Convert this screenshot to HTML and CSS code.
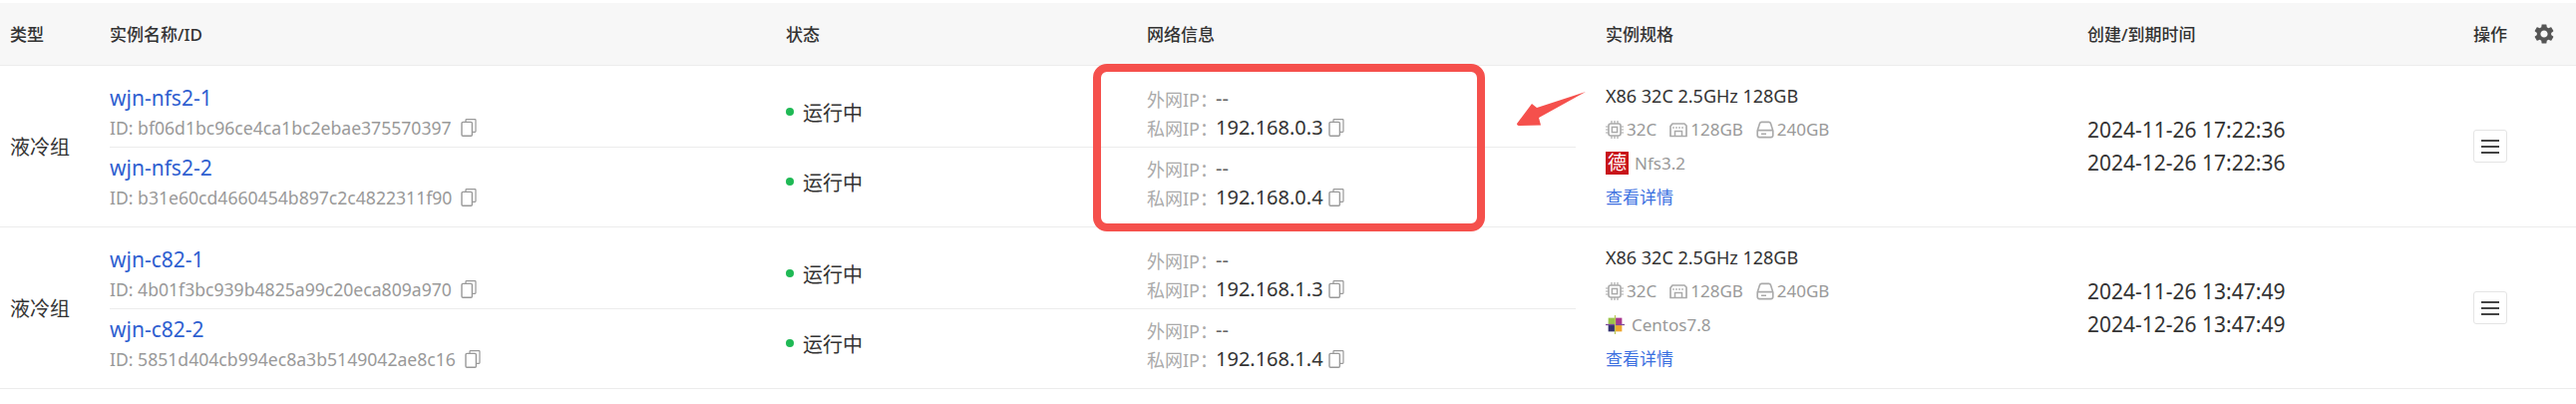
FILE: index.html
```html
<!DOCTYPE html>
<html lang="zh-CN">
  <head>
    <meta charset="UTF-8" />
    <title>实例列表</title>
    <link rel="stylesheet" href="styles.css">
  </head>
  <body>
    <svg class="defs" width="0" height="0">
      <symbol id="copy" viewBox="0 0 16 18">
        <path d="M5 3V1.500A.8.8 0 0 1 5.800.7h8.400a.8.8 0 0 1 .8.8v11a.8.8 0 0 1-.8.8H12" fill="none" stroke="currentColor" stroke-width="1.2" />
        <rect x="1" y="3.400" width="10.400" height="13.900" rx="1.200" fill="none" stroke="currentColor" stroke-width="1.4" />
      </symbol>
      <symbol id="cpu" viewBox="0 0 18 18">
        <rect x="3" y="3" width="12" height="12" rx="2" fill="none" stroke="currentColor" stroke-width="1.6" />
        <rect x="6.400" y="6.400" width="5.200" height="5.200" fill="none" stroke="currentColor" stroke-width="1.5" />
        <path d="M6 0v3M9 0v3M12 0v3M6 15v3M9 15v3M12 15v3M0 6h3M0 9h3M0 12h3M15 6h3M15 9h3M15 12h3" stroke="currentColor" stroke-width="1.2" />
      </symbol>
      <symbol id="mem" viewBox="0 0 18 16">
        <path d="M1 14.500V4.500L3 2h12l2 2v10.500z" fill="none" stroke="currentColor" stroke-width="1.7" stroke-linejoin="round" />
        <path d="M5.500 14V9.500h7V14" fill="none" stroke="currentColor" stroke-width="1.5" />
        <path d="M4 5v2M7 5v2M10 5v2M13 5v2" stroke="currentColor" stroke-width="1.2" />
      </symbol>
      <symbol id="disk" viewBox="0 0 18 18">
        <path d="M1.200 10 3.500 2.800A2 2 0 0 1 5.400 1.400h7.200a2 2 0 0 1 1.900 1.400L16.800 10v4.600a2 2 0 0 1-2 2H3.200a2 2 0 0 1-2-2z" fill="none" stroke="currentColor" stroke-width="1.6" />
        <path d="M1.200 9.600h15.600M5 13.200h5" stroke="currentColor" stroke-width="1.6" />
      </symbol>
      <symbol id="gear" viewBox="0 0 24 24">
        <path d="M19.140 12.940c.04-.3.06-.61.06-.94 0-.32-.02-.64-.07-.94l2.030-1.580a.49.49 0 0 0 .12-.61l-1.920-3.320a.488.488 0 0 0-.59-.22l-2.390.96c-.5-.38-1.030-.7-1.620-.94l-.36-2.540a.484.484 0 0 0-.48-.41h-3.840c-.24 0-.43.17-.47.41l-.36 2.540c-.59.24-1.130.57-1.620.94l-2.390-.96c-.22-.08-.47 0-.59.22L2.740 8.870c-.12.21-.08.47.12.61l2.030 1.580c-.05.3-.09.63-.09.94s.02.64.07.94l-2.030 1.580a.49.49 0 0 0-.12.61l1.920 3.320c.12.22.37.29.59.22l2.390-.96c.5.38 1.030.7 1.620.94l.36 2.540c.05.24.24.41.48.41h3.840c.24 0 .44-.17.47-.41l.36-2.540c.59-.24 1.130-.56 1.620-.94l2.390.96c.22.08.47 0 .59-.22l1.920-3.320c.12-.22.07-.47-.12-.61l-2.010-1.580zM12 15.600c-1.980 0-3.600-1.620-3.600-3.600s1.620-3.600 3.600-3.600 3.600 1.620 3.600 3.600-1.620 3.600-3.600 3.600z" fill="currentColor" />
      </symbol>
      <symbol id="menu" viewBox="0 0 18 16">
        <path d="M0 2h18M0 8h18M0 14h18" stroke="currentColor" stroke-width="1.8" />
      </symbol>
    </svg>

    <div class="page">
      <div class="table-head">
        <div>类型</div>
        <div>实例名称/ID</div>
        <div>状态</div>
        <div>网络信息</div>
        <div>实例规格</div>
        <div>创建/到期时间</div>
        <div class="op-head">
          <span>操作</span>
          <svg class="gear"><use href="#gear" /></svg>
        </div>
      </div>

      <div class="group">
        <div class="type">液冷组</div>
        <div class="instances">
          <div class="instance">
            <div>
              <a class="name">wjn-nfs2-1</a>
              <div class="inst-id">ID: bf06d1bc96ce4ca1bc2ebae375570397 <svg class="copy"><use href="#copy" /></svg></div>
            </div>
            <div class="status"><i class="dot"></i>运行中</div>
            <div>
              <div class="ip"><span class="ip-label">外网IP：</span><span class="ip-none">--</span></div>
              <div class="ip"><span class="ip-label">私网IP：</span>192.168.0.3 <svg class="copy copy-ip"><use href="#copy" /></svg></div>
            </div>
          </div>
          <div class="instance">
            <div>
              <a class="name">wjn-nfs2-2</a>
              <div class="inst-id">ID: b31e60cd4660454b897c2c4822311f90 <svg class="copy"><use href="#copy" /></svg></div>
            </div>
            <div class="status"><i class="dot"></i>运行中</div>
            <div>
              <div class="ip"><span class="ip-label">外网IP：</span><span class="ip-none">--</span></div>
              <div class="ip"><span class="ip-label">私网IP：</span>192.168.0.4 <svg class="copy copy-ip"><use href="#copy" /></svg></div>
            </div>
          </div>
        </div>
        <div class="spec">
          <div class="spec-title">X86 32C 2.5GHz 128GB</div>
          <div class="spec-line">
            <span class="res"><svg class="res-icon"><use href="#cpu" /></svg>32C</span>
            <span class="res"><svg class="res-icon"><use href="#mem" /></svg>128GB</span>
            <span class="res"><svg class="res-icon"><use href="#disk" /></svg>240GB</span>
          </div>
          <div class="spec-line"><span class="logo-de">德</span>Nfs3.2</div>
          <a class="detail">查看详情</a>
        </div>
        <div class="time">
          <div>2024-11-26 17:22:36</div>
          <div>2024-12-26 17:22:36</div>
        </div>
        <div class="op"><button class="menu-btn"><svg class="menu"><use href="#menu" /></svg></button></div>
      </div>

      <div class="group">
        <div class="type">液冷组</div>
        <div class="instances">
          <div class="instance">
            <div>
              <a class="name">wjn-c82-1</a>
              <div class="inst-id">ID: 4b01f3bc939b4825a99c20eca809a970 <svg class="copy"><use href="#copy" /></svg></div>
            </div>
            <div class="status"><i class="dot"></i>运行中</div>
            <div>
              <div class="ip"><span class="ip-label">外网IP：</span><span class="ip-none">--</span></div>
              <div class="ip"><span class="ip-label">私网IP：</span>192.168.1.3 <svg class="copy copy-ip"><use href="#copy" /></svg></div>
            </div>
          </div>
          <div class="instance">
            <div>
              <a class="name">wjn-c82-2</a>
              <div class="inst-id">ID: 5851d404cb994ec8a3b5149042ae8c16 <svg class="copy"><use href="#copy" /></svg></div>
            </div>
            <div class="status"><i class="dot"></i>运行中</div>
            <div>
              <div class="ip"><span class="ip-label">外网IP：</span><span class="ip-none">--</span></div>
              <div class="ip"><span class="ip-label">私网IP：</span>192.168.1.4 <svg class="copy copy-ip"><use href="#copy" /></svg></div>
            </div>
          </div>
        </div>
        <div class="spec">
          <div class="spec-title">X86 32C 2.5GHz 128GB</div>
          <div class="spec-line">
            <span class="res"><svg class="res-icon"><use href="#cpu" /></svg>32C</span>
            <span class="res"><svg class="res-icon"><use href="#mem" /></svg>128GB</span>
            <span class="res"><svg class="res-icon"><use href="#disk" /></svg>240GB</span>
          </div>
          <div class="spec-line">
            <svg class="logo-centos" viewBox="0 0 18 18">
              <rect x="2.500" y="2.500" width="6" height="6" fill="#9bc44a" />
              <rect x="9.500" y="2.500" width="6" height="6" fill="#a8398f" />
              <rect x="2.500" y="9.500" width="6" height="6" fill="#33316f" />
              <rect x="9.500" y="9.500" width="6" height="6" fill="#efa72d" />
              <path d="M0 9h18" stroke="#7d4a9c" stroke-width="1.2" />
              <path d="M9 0v18" stroke="#b9c95a" stroke-width="1.2" />
            </svg>Centos7.8
          </div>
          <a class="detail">查看详情</a>
        </div>
        <div class="time">
          <div>2024-11-26 13:47:49</div>
          <div>2024-12-26 13:47:49</div>
        </div>
        <div class="op"><button class="menu-btn"><svg class="menu"><use href="#menu" /></svg></button></div>
      </div>

      <!-- annotation drawn over the screenshot -->
      <div class="red-box"></div>
      <svg class="red-arrow" viewBox="0 0 80 45">
        <path d="M75 7 26 23 21 19 6 39Q6 41 9 41L30 40.500 28 33Z" fill="#f5504c" />
      </svg>
    </div>
  </body>
</html>
```

FILE: styles.css
```css
* {
  box-sizing: border-box;
}

body {
  margin: 0;
  background-color: #fff;
  font-family: "Noto Sans", "Noto Sans CJK SC", sans-serif;
  color: #333;
}

.defs {
  position: absolute;
}

.page {
  position: relative;
  padding-top: 3px;
}

.table-head {
  display: grid;
  grid-template-columns: 110px 678px 362px 460px 483px 387px 103px;
  align-items: center;
  height: 63px;
  padding-bottom: 1px;
  background-color: #f7f7f7;
  border-bottom: 1px solid #ececec;
  font-size: 17px;
  font-weight: 500;
}

.table-head > div:first-child {
  padding-left: 10px;
}

.op-head {
  display: flex;
  align-items: center;
  gap: 25px;
}

.gear {
  width: 24px;
  height: 24px;
  color: #555;
}

.group {
  display: grid;
  grid-template-columns: 110px 1470px 30px 483px 387px 103px;
  align-items: center;
  border-bottom: 1px solid #ececec;
}

.type {
  padding-left: 10px;
  font-size: 20px;
}

.instance {
  display: grid;
  grid-template-columns: 678px 362px 430px;
  align-items: center;
  padding: 17px 0 4px;
  border-bottom: 1px solid #ececec;
}

.instance:last-child {
  padding: 5px 0 14px;
  border-bottom: none;
}

.name {
  display: block;
  height: 30px;
  line-height: 30px;
  font-size: 21px;
  color: #2f5fd0;
}

.inst-id {
  display: flex;
  align-items: center;
  gap: 9px;
  height: 30px;
  font-size: 17.6px;
  color: #999;
}

.copy {
  width: 16px;
  height: 18px;
  color: #999;
}

.copy-ip {
  margin-left: 2px;
}

.status {
  display: flex;
  align-items: center;
  padding-bottom: 2px;
  font-size: 20px;
}

.dot {
  width: 8px;
  height: 8px;
  margin: 0 9px 0 0;
  border-radius: 50%;
  background-color: #1fb955;
}

.ip {
  display: flex;
  align-items: center;
  gap: 3px;
  height: 29px;
  font-size: 20px;
}

.ip-label {
  width: 66px;
  font-size: 18px;
  color: #aaa;
  white-space: nowrap;
}

.ip-none {
  color: #666;
}

.spec {
  grid-column: 4;
  display: flex;
  flex-direction: column;
  font-size: 17px;
}

.spec-title,
.spec-line,
.detail {
  display: flex;
  align-items: center;
  height: 33.500px;
}

.spec-title {
  font-size: 18px;
}

.spec-line {
  color: #999;
}

.res {
  display: flex;
  align-items: center;
  gap: 3px;
  margin-right: 13px;
}

.res-icon {
  width: 18px;
  height: 18px;
  color: #aaa;
}

.logo-de {
  display: flex;
  align-items: center;
  justify-content: center;
  width: 23px;
  height: 23px;
  margin-right: 6px;
  background-color: #c8141a;
  color: #fff;
  font-size: 19px;
  line-height: 1;
}

.logo-centos {
  width: 19px;
  height: 19px;
  margin-right: 7px;
}

.detail {
  color: #3b6fe0;
}

.time {
  font-size: 21px;
  line-height: 33px;
}

.op {
  display: flex;
}

.menu-btn {
  display: flex;
  align-items: center;
  justify-content: center;
  width: 34px;
  height: 33px;
  padding: 0;
  background-color: #fff;
  border: 1px solid #e4e4e4;
  border-radius: 3px;
}

.menu {
  width: 18px;
  height: 16px;
  color: #444;
}

.red-box {
  position: absolute;
  left: 1096px;
  top: 64px;
  width: 393px;
  height: 168px;
  border: 8px solid #f5504c;
  border-radius: 14px;
}

.red-arrow {
  position: absolute;
  left: 1515px;
  top: 85px;
  width: 80px;
  height: 45px;
}
```
